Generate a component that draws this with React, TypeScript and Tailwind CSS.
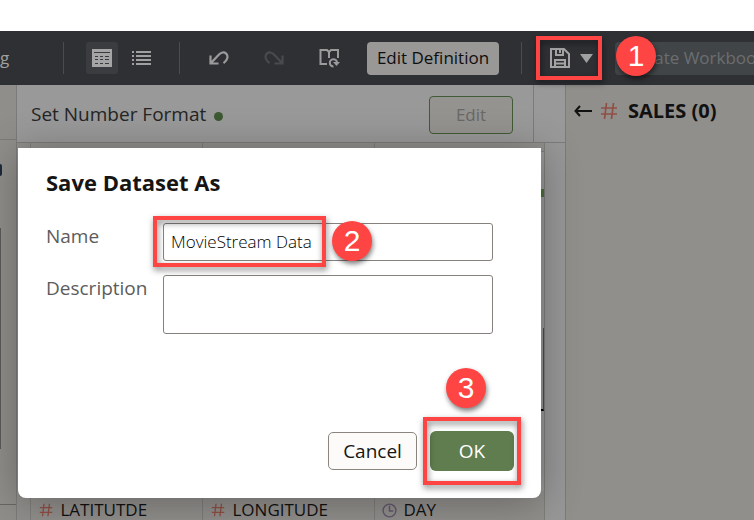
import type { ReactNode } from 'react';

const calloutShadow = 'shadow-[1px_3px_5px_rgba(0,0,0,0.5)]';

function Callout({ n, className }: { n: number; className: string }) {
  return (
    <span
      className={`absolute z-20 flex size-10 items-center justify-center rounded-full bg-[#ff4444] font-['Liberation_Sans',sans-serif] text-[30px] leading-none text-white ${calloutShadow} ${className}`}
    >
      {n}
    </span>
  );
}

function Highlight({ className }: { className: string }) {
  return (
    <span
      className={`pointer-events-none absolute z-10 border-4 border-[#ff4444] drop-shadow-[1px_3px_3px_rgba(0,0,0,0.5)] ${className}`}
    />
  );
}

function ToolButton({ label, className = '', children }: { label: string; className?: string; children: ReactNode }) {
  return (
    <button type="button" aria-label={label} className={`flex size-8 shrink-0 items-center justify-center rounded-[3px] ${className}`}>
      {children}
    </button>
  );
}

function Divider({ className }: { className: string }) {
  return <span className={`h-8 w-px shrink-0 bg-[#4a4c50] ${className}`} />;
}

function TableIcon() {
  return (
    <svg width="20" height="18" viewBox="0 0 20 18" shapeRendering="crispEdges">
      <path fill="#a5a5a5" d="M0 0h20v18H0z" />
      <path fill="#393b3f" d="M2 3h16v1H2zM3 7h3v1H3zM8 7h3v1H8zM13 7h4v1h-4zM3 10h3v1H3zM8 10h3v1H8zM13 10h4v1h-4zM3 14h3v1H3zM8 14h3v1H8zM13 14h4v1h-4z" />
    </svg>
  );
}

function ListIcon() {
  return (
    <svg width="19" height="14" viewBox="0 0 19 14" shapeRendering="crispEdges">
      <path fill="#a0a0a0" d="M0 0h2v2H0zM4 0h15v2H4zM0 4h2v2H0zM4 4h15v2H4zM0 8h2v2H0zM4 8h15v2H4zM0 12h2v2H0zM4 12h15v2H4z" />
    </svg>
  );
}

function ArrowIcon({ flip = false }: { flip?: boolean }) {
  return (
    <svg width="20" height="14" viewBox="0 0 20 14" fill="none" stroke={flip ? '#484a4e' : '#9b9b9b'} strokeWidth="2.200" className={flip ? '-scale-x-100' : ''}>
      <path d="M1.500 4.500v8H9.500M2 12L9.500 4C12 1.200 15 .6 17.200 2.600C19.300 4.700 19 9 14.500 12.200" />
    </svg>
  );
}

function BookRefreshIcon() {
  return (
    <svg width="21" height="20" viewBox="0 0 21 20" fill="none" stroke="#9b9b9b" strokeWidth="2">
      <path d="M8 16H1.500V2H8l2 2L12 2h7v8M10 4v6" />
      <path d="M14.500 18.500a3.600 3.600 0 1 1 3.500-4" />
      <path fill="#9b9b9b" stroke="none" d="M14 14H21L17.500 18z" />
    </svg>
  );
}

function SaveIcon() {
  return (
    <svg width="20" height="20" viewBox="0 0 20 20" fill="none" stroke="#a3a3a3" strokeWidth="2">
      <path d="M1 1h13l5 5v13H1z" />
      <path d="M6 1v6h7V1M5 19v-7h10v7M5 15.500h10M10 2v3" />
    </svg>
  );
}

function HashIcon({ size }: { size: number }) {
  return (
    <svg width={size} height={size} viewBox="0 0 18 18" fill="none" stroke="#904f44" strokeWidth="1.700" className="shrink-0">
      <path d="M6.500 1L4.500 17M13.500 1L11.500 17M1 6h16M1 12h16" />
    </svg>
  );
}

function ClockIcon() {
  return (
    <svg width="15" height="15" viewBox="0 0 16 16" fill="none" stroke="#62566c" strokeWidth="1.500" className="shrink-0">
      <circle cx="8" cy="8" r="6.800" />
      <path d="M8 3v5.500h4" />
    </svg>
  );
}

function Toolbar() {
  return (
    <header className="flex h-[54px] shrink-0 items-center bg-[#2e3034]">
      <span className="w-[63px] shrink-0 text-[17px] text-[#a0a0a0]">g</span>
      <Divider className="" />
      <ToolButton label="Table view" className="ml-[22px] bg-[#3a3c40]"><TableIcon /></ToolButton>
      <ToolButton label="List view" className="ml-[7px]"><ListIcon /></ToolButton>
      <Divider className="ml-[22px]" />
      <ToolButton label="Undo" className="ml-[23px]"><ArrowIcon /></ToolButton>
      <ToolButton label="Redo" className="ml-[23px]"><ArrowIcon flip /></ToolButton>
      <ToolButton label="Refresh data" className="ml-[23px]"><BookRefreshIcon /></ToolButton>
      <button type="button" className="ml-[22px] h-[33px] w-[132px] shrink-0 rounded-[4px] bg-[#999896] text-[17px] leading-6 whitespace-nowrap text-[#0e0e0e]">
        Edit Definition
      </button>
      <Divider className="ml-[22px]" />
      <div className="relative ml-[14px] flex h-11 w-[66px] shrink-0 items-center pl-[14px]">
        <button type="button" aria-label="Save"><SaveIcon /></button>
        <button type="button" aria-label="Save options" className="ml-[10px]">
          <svg width="13" height="9" viewBox="0 0 13 9"><path fill="#a0a0a0" d="M0 0h13L6.500 9z" /></svg>
        </button>
        <Highlight className="inset-0" />
        <Callout n={1} className="top-0 left-20" />
      </div>
      <button type="button" disabled className="ml-[13px] h-[33px] shrink-0 rounded-[4px] bg-[#414547] px-3 text-[17px] leading-6 whitespace-nowrap text-[#6b6e70]">
        Create Workbook
      </button>
    </header>
  );
}

function StepHeader() {
  return (
    <div className="flex h-[58px] shrink-0 border-b border-[#7c7b79] bg-[#999]">
      <div className="flex flex-1 items-center pt-[2px] pl-[14px]">
        <h2 className="text-[19px] whitespace-nowrap text-[#252525]">Set Number Format</h2>
        <span className="mt-1 ml-2 size-[9px] rounded-full bg-[#3d5931]" />
        <button type="button" disabled className="mr-5 ml-auto h-[38px] w-[84px] rounded-[4px] border border-[#405b35] bg-[#959390] text-[17px] text-[#686868]">
          Edit
        </button>
      </div>
      <div className="w-8 border-l border-[#7c7b79]" />
    </div>
  );
}

function DataTable() {
  const rule = 'border-r border-[#7f7d7a]';
  return (
    <div className="flex flex-1 bg-[#979797]">
      <table className="h-full w-[528px] table-fixed border-collapse bg-[#918f8c] text-left text-[17px] text-[#111]">
        <thead>
          <tr className="h-2">
            <th className={`w-[13px] ${rule}`} />
            <th className={`w-[172px] ${rule}`} />
            <th className={`w-[172px] ${rule}`} />
            <th className={`${rule}`} />
          </tr>
        </thead>
        <tbody>
          <tr>
            <td className={rule} />
            <td className={rule} />
            <td className={rule} />
            <td className={`${rule} p-0 align-top`}>
              <div className="ml-auto h-[38px] w-1 border-t border-[#7c7b79] bg-[#979797]" />
              <div className="ml-auto h-2 w-1 bg-[#4a703c]" />
              <div className="ml-auto h-[131px] w-1 bg-[#979797]" />
              <div className="ml-auto h-[83px] w-1 border-r border-b-2 border-r-[#3d5931] border-b-black bg-[#979797]" />
              <div className="ml-auto h-[80px] w-1 bg-[#979797]" />
            </td>
          </tr>
          <tr className="h-5">
            <td className={rule} />
            <td className={`${rule} p-0 pl-2`}>
              <span className="flex items-center gap-2 leading-5"><HashIcon size={14} />LATITUTDE</span>
            </td>
            <td className={`${rule} p-0 pl-2`}>
              <span className="flex items-center gap-2 leading-5"><HashIcon size={14} />LONGITUDE</span>
            </td>
            <td className={`${rule} p-0 pl-[7px]`}>
              <span className="flex items-center gap-[7px] leading-5"><ClockIcon />DAY</span>
            </td>
          </tr>
        </tbody>
      </table>
    </div>
  );
}

function SideStrip() {
  return (
    <aside className="flex w-[17px] shrink-0 flex-col border-r border-[#7c7b79] bg-[#908e8b]">
      <div className="h-[55px] shrink-0 border-b border-[#7c7b79]" />
      <div className="flex h-[88px] shrink-0 items-center">
        <span className="mb-7 h-3 w-[2px] rounded-r-full bg-[#1c2a3a]" />
      </div>
      <div className="h-[221px] w-px shrink-0 bg-[#5c5a58]" />
      <div className="mt-[55px] flex-1 border-t border-[#696765]" />
    </aside>
  );
}

function SaveDialog() {
  return (
    <form
      role="dialog"
      aria-labelledby="dialog-title"
      className="absolute top-[148px] left-[18px] w-[523px] rounded-b-[8px] bg-white pt-5 pb-[27px] pl-7 shadow-[0_4px_40px_rgba(0,0,0,0.3)]"
    >
      <h1 id="dialog-title" className="text-[22px] leading-7 font-bold text-[#161513]">Save Dataset As</h1>
      <div className="mt-[27px] grid w-[447px] grid-cols-[117px_1fr] gap-y-[14px]">
        <label htmlFor="name" className="text-[19px] leading-[26px] text-[#5c5c5c]">Name</label>
        <div className="relative h-[38px]">
          <input id="name" defaultValue="MovieStream Data" className="size-full rounded-[3px] border border-[#85817d] bg-white px-[7px] pb-[2px] text-[17px] font-light text-black" />
          <Highlight className="-top-[7px] -left-[10px] h-[51px] w-[173px]" />
          <Callout n={2} className="-top-[2px] left-[169px]" />
        </div>
        <label htmlFor="description" className="text-[19px] leading-[26px] text-[#5c5c5c]">Description</label>
        <textarea id="description" className="h-[59px] w-full resize-none rounded-[3px] border border-[#85817d] bg-white p-2 text-[17px]" />
      </div>
      <div className="mt-[97px] mr-[27px] flex items-center justify-end gap-[13px]">
        <button type="button" className="h-[38px] w-[89px] rounded-[5px] border border-[#8b8580] bg-[#fcfbfa] text-[19px] text-[#161513]">Cancel</button>
        <div className="relative">
          <button type="submit" className="block h-10 w-[84px] rounded-[6px] bg-[#5f7d4f] text-[19px] font-medium text-white">OK</button>
          <Highlight className="-top-[14px] -left-[7px] h-[68px] w-[98px]" />
          <Callout n={3} className="-top-[63px] left-4" />
        </div>
      </div>
    </form>
  );
}

export default function App() {
  return (
    <div className="relative flex h-screen flex-col overflow-hidden bg-white pt-[31px] font-['Open_Sans','Noto_Sans',sans-serif]">
      <Toolbar />
      <div className="flex min-h-0 flex-1">
        <SideStrip />
        <main className="flex w-[548px] shrink-0 flex-col">
          <StepHeader />
          <DataTable />
        </main>
        <aside className="flex-1 border-l border-[#7c7b79] bg-[#918f8c]">
          <div className="flex items-center pt-3 pl-2">
            <button type="button" aria-label="Back">
              <svg width="18" height="12" viewBox="0 0 18 12" fill="none" stroke="#111" strokeWidth="2"><path d="M6 1L1.500 6L6 11M1.500 6H18" /></svg>
            </button>
            <span className="ml-2"><HashIcon size={18} /></span>
            <h2 className="ml-[10px] text-xl font-bold whitespace-nowrap text-[#111]">SALES (0)</h2>
          </div>
        </aside>
      </div>
      <SaveDialog />
    </div>
  );
}
